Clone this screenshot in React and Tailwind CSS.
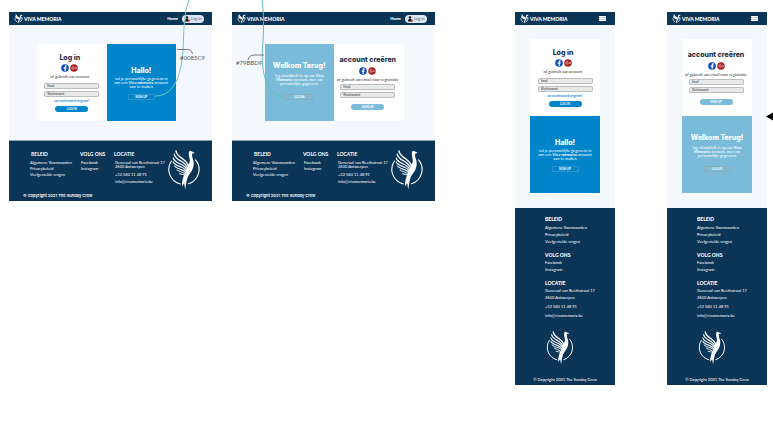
import React, { useId } from "react";

const cx = (...parts) => parts.filter(Boolean).join(" ");

const FOOTER = {
  beleid: ["Algemene Voorwaarden", "Privacybeleid", "Veelgestelde vragen"],
  volg: ["Facebook", "Instagram"],
  straat: ["Generaal van Reethstraat 17", "2600 Antwerpen"],
  contact: ["+32 560 11 48 91", "info@vivamemoria.be"],
};

function Bird({ className }) {
  return (
    <svg viewBox="0 0 32 40" className={className} fill="none" stroke="#fff" strokeLinecap="round" aria-hidden="true">
      <path d="M3.400 11A15 15 0 0 0 12.500 34" strokeWidth="1.100" />
      <path d="M27.500 9.800A15 15 0 0 1 20.500 33.800" strokeWidth="1.100" />
      <path d="M20.800 3C21 0.800 22.800 0.300 24 1.500L27 3L24.300 3.600C23.600 5.500 24.400 7.500 25.200 10C26.600 15 25 20 21.800 23.800C19.300 27 18.800 30 18.300 33L17.200 39.500L16.200 33L14 36.500C13.800 31 15 27 16.500 24.500C17.500 22 19 20.500 19.500 17.500C20.500 14 22 13 21.800 10C21.600 8 20.600 5.500 20.800 3Z" fill="#fff" stroke="none" />
      <path d="M8 1C8.500 5 12 7 15.500 9.500C19 12 21 15 20.500 19" strokeWidth="1.500" />
      <path d="M6.200 4.200C7 8.500 11 10 14.500 12C17.500 14 19.500 16 19.500 20" strokeWidth="1.300" />
      <path d="M5.200 8C6 11.500 10 13 13.500 14.500C16.500 16 18.500 17.500 18.800 21" strokeWidth="1.200" />
      <path d="M5.200 12C6.500 14.700 10 15.900 13 17C15.800 18 17.500 19.200 18.300 22" strokeWidth="1.200" />
      <path d="M6.500 16C8 18 11 18.700 13.500 19.600C15.500 20.200 17 21 17.800 23" strokeWidth="1.100" />
      <path d="M9 20C11 21.500 14 21.600 17 24M11.500 23.800C13 24.500 15 24.500 17 25" strokeWidth="1" />
    </svg>
  );
}

function SmallBird() {
  return (
    <svg viewBox="0 0 9 9" className="size-[9px] shrink-0" fill="none" stroke="#fff" strokeLinecap="round" aria-hidden="true">
      <path d="M2 1C2.500 2.500 3.500 3 5 4M1.500 2.800C2.500 4 3.500 4.200 4.800 4.800M7.800 1.300C6.300 1 6.600 2.500 6.300 3.800C6 5.400 4.800 5.800 4.300 8.300" strokeWidth="1.100" />
      <path d="M1 4.800C1 6 1.800 7.300 3 7.800M7.800 3.500C8.300 5.300 7.400 7.200 5.900 7.900" strokeWidth="0.900" strokeDasharray="1.200 1" />
    </svg>
  );
}

function Socials() {
  return (
    <div className="flex justify-center gap-px">
      <button type="button" aria-label="Facebook" className="size-2">
        <svg viewBox="0 0 8 8" className="size-2">
          <circle cx="4" cy="4" r="3.800" fill="#0b48b8" />
          <path d="M3.600 7V4.700H2.600V3.600H3.600V3C3.600 1.800 4.200 1.200 5.700 1.400V2.400C5 2.300 4.800 2.500 4.800 3V3.600H5.700L5.500 4.700H4.800V7Z" fill="#fff" />
        </svg>
      </button>
      <button type="button" aria-label="Google+" className="size-2">
        <svg viewBox="0 0 8 8" className="size-2">
          <circle cx="4" cy="4" r="3.800" fill="#a82424" />
          <path d="M4.200 3.100A1.300 1.300 0 1 0 4.300 4.600V4.100H3.300M5.300 4H6.800M6 3.300V4.800" fill="none" stroke="#f3dcdc" strokeWidth="0.600" />
        </svg>
      </button>
    </div>
  );
}

function Header({ mobile }) {
  return (
    <header className={cx("flex h-[13px] items-center bg-[#0b3557] pl-[5px] text-white", mobile ? "pr-[9px]" : "pr-2")}>
      <SmallBird />
      <span className="ml-px text-[5px] leading-[8px] font-black whitespace-nowrap">VIVA MEMORIA</span>
      {mobile ? (
        <button type="button" aria-label="Menu" className="ml-auto">
          <svg viewBox="0 0 7 5" className="block h-[5px] w-[7px]">
            <path d="M0 0H7V5H0Z" fill="#c3ced8" />
            <path d="M0 .5H7M0 2.500H7M0 4.500H7" stroke="#fff" strokeWidth="1" />
          </svg>
        </button>
      ) : (
        <nav className="ml-auto flex items-center gap-1">
          <a href="#home" className="text-[4px] leading-[6px] font-black">Home</a>
          <button type="button" className="flex h-2 w-[22px] items-center gap-px rounded-full bg-[#d9e6f2] pl-[3px] text-[4px] leading-[6px] text-[#52606e]">
            <svg viewBox="0 0 5 6" className="h-[6px] w-[5px] shrink-0">
              <circle cx="2" cy="1.500" r="1.300" fill="#111" />
              <path d="M0 5.500C0 3.500 1 3 2 3S4 3.500 4 5.500Z" fill="#111" />
              <circle cx="4" cy="4.500" r="1" fill="#e03030" />
            </svg>
            <span className="whitespace-nowrap">Log in</span>
          </button>
        </nav>
      )}
    </header>
  );
}

function Field({ label, type }) {
  const id = useId();
  return (
    <label htmlFor={id} className="block h-[6px] w-[55px]">
      <input
        id={id}
        type={type}
        aria-label={label}
        placeholder={label}
        className="block h-[6px] w-full rounded-[2px] bg-[#e9e9e9] px-[3px] py-0 text-[3px] leading-[6px] ring-1 ring-[#bdbdbd] ring-inset placeholder:text-[#333]"
      />
    </label>
  );
}

const title = "font-[Inter,sans-serif] text-[7px] leading-[10px] font-extrabold whitespace-nowrap";

function FormCard({ register }) {
  return (
    <form className={cx("flex h-[77px] min-w-0 flex-1 flex-col items-center bg-white text-[#1f2f45]", register ? "pt-[11px] pr-0.5" : "pt-[9px]")}>
      <div className={cx("flex flex-col items-center", !register && "pr-1")}>
        <h2 className={cx(title, register ? "mb-0.5" : "mb-px")}>
          {register ? "account creëren" : "Log in"}
        </h2>
        <Socials />
        <p className={cx("mt-0.5 text-[4px] leading-[6px] whitespace-nowrap text-[#333]", register ? "mb-px" : "mb-[3px]")}>
          {register ? "of gebruik uw email voor registratie" : "of gebruik uw account"}
        </p>
      </div>
      <div className="flex flex-col gap-0.5">
        <Field label="Email" type="email" />
        <Field label="Wachtwoord" type="password" />
      </div>
      {!register && (
        <a href="#vergeten" className="mt-px mb-0.5 text-[3px] leading-[6px] font-bold whitespace-nowrap text-[#1688d8]">
          uw wachtwoord vergeten?
        </a>
      )}
      <button
        type="button"
        className={cx("h-[6px] w-[33px] rounded-full text-[3px] leading-[6px] font-bold text-white", register ? "mt-[6px] bg-[#79bbd9]" : "bg-[#0085ca]")}
      >
        {register ? "SIGN UP" : "LOG IN"}
      </button>
    </form>
  );
}

function Panel({ welcome }) {
  return (
    <section className={cx("flex h-[77px] min-w-0 flex-1 flex-col items-center text-center text-white", welcome ? "bg-[#79bbd9] pt-[17px]" : "bg-[#0085ca] pt-[22px]")}>
      <h2 className={title}>{welcome ? "Welkom Terug!" : "Hallo!"}</h2>
      {welcome ? (
        <p className="mt-[3px] mb-2 text-[4px] leading-[4px] whitespace-nowrap">
          log alstublieft in op uw <b>Viva</b><br /><b>Memoria</b> account, met uw<br />persoonlijke gegevens
        </p>
      ) : (
        <p className="mt-px mb-[5px] text-[4px] leading-[4px] whitespace-nowrap">
          vul je persoonlijke gegevens in<br />om een <b>Viva memoria</b> account<br />aan te maken
        </p>
      )}
      <button type="button" className={cx("h-[6px] w-[27px] rounded-[1px] text-[3px] leading-[6px] font-bold ring-1 ring-inset", welcome ? "ring-[#8cabb9]" : "ring-[#2f93c8]")}>
        {welcome ? "LOG IN" : "SIGN UP"}
      </button>
    </section>
  );
}

function Links({ items, className }) {
  return (
    <ul className={className}>
      {items.map((t) => (
        <li key={t}><a href="#info">{t}</a></li>
      ))}
    </ul>
  );
}

function DesktopFooter() {
  return (
    <footer className="border-t border-[#8aa3b5] bg-[#0b3557] text-white">
      <div className="flex h-[49px] pt-[9px] pr-[12px] pl-[21px] text-[4px] whitespace-nowrap">
        <div className="w-[51px]">
          <h3 className="mb-0.5 pl-px text-[5px] leading-[8px] font-bold">BELEID</h3>
          <Links items={FOOTER.beleid} className="leading-[6px]" />
        </div>
        <div className="w-[33px]">
          <h3 className="mb-0.5 -ml-px text-[5px] leading-[8px] font-bold">VOLG ONS</h3>
          <Links items={FOOTER.volg} className="leading-[6px]" />
        </div>
        <div>
          <h3 className="mb-[3px] text-[5px] leading-[8px] font-bold">LOCATIE</h3>
          <address className="pl-px not-italic">
            <Links items={FOOTER.straat} className="leading-[4px]" />
            <Links items={FOOTER.contact} className="mt-0.5 leading-[7px]" />
          </address>
        </div>
        <Bird className="ml-auto h-10 w-8 shrink-0" />
      </div>
      <p className="h-[11px] pl-[14px] font-[Inter,sans-serif] text-[4px] leading-[11px] font-semibold whitespace-nowrap">© Copyright 2021 The Sunday Crew</p>
    </footer>
  );
}

function MobileFooter() {
  return (
    <footer className="bg-[#0b3557] pt-[7px] text-white">
      <div className="pl-[30px] text-[4px] leading-[7px] whitespace-nowrap">
        <h3 className="mb-px text-[5px] leading-[8px] font-black">BELEID</h3>
        <Links items={FOOTER.beleid} />
        <h3 className="mt-[6px] text-[5px] leading-[8px] font-black">VOLG ONS</h3>
        <Links items={FOOTER.volg} />
        <h3 className="mt-[6px] text-[5px] leading-[8px] font-black">LOCATIE</h3>
        <address className="not-italic">
          <Links items={FOOTER.straat} />
          <Links items={FOOTER.contact} className="flex flex-col gap-0.5 pt-0.5" />
        </address>
      </div>
      <Bird className="mt-3 ml-[31px] h-[34px] w-[28px]" />
      <p className="mt-[9px] h-[11px] text-center text-[4px] leading-[11px] font-medium whitespace-nowrap">© Copyright 2021 The Sunday Crew</p>
    </footer>
  );
}

function Desktop({ register }) {
  return (
    <article className="min-w-0 flex-1 bg-[#f5f9fd]">
      <Header />
      <main className={cx("flex pt-[19px] pb-[19px]", register ? "pr-[31px] pl-[33px]" : "pr-[36px] pl-[28px]")}>
        {register ? <><Panel welcome /><FormCard register /></> : <><FormCard /><Panel /></>}
      </main>
      <DesktopFooter />
    </article>
  );
}

function Mobile({ register }) {
  return (
    <article className="min-w-0 flex-1 bg-[#f5f9fd]">
      <Header mobile />
      <main className="flex flex-col px-[15px] pt-[14px] pb-[15px]">
        <div className="flex"><FormCard register={register} /></div>
        <div className="flex"><Panel welcome={register} /></div>
      </main>
      <MobileFooter />
    </article>
  );
}

function Connectors() {
  return (
    <svg viewBox="0 0 773 125" className="pointer-events-none absolute top-0 left-0 h-[125px] w-[773px]" fill="none" aria-hidden="true">
      <path d="M155 96C176 96 183 72 183.500 38C184 20 186 8 189 0" stroke="#74c6bb" />
      <path d="M262 0C264 12 264 30 262.500 48C261 72 266 96 284 96.500" stroke="#62bfb4" />
      <path d="M177 49.500H187C190 49.500 192 51 192.500 54" stroke="#555" strokeWidth="0.800" />
      <path d="M264 55H254C251 55 248.500 57 248 60" stroke="#555" strokeWidth="0.800" />
      <path d="M766 116.500L773 112.500V120.500Z" fill="#000" />
    </svg>
  );
}

export default function App() {
  return (
    <div className="relative min-h-screen overflow-hidden bg-white font-[Lato,sans-serif]">
      <div className="flex items-start pt-3 pr-[6px] pl-[9px]">
        <div className="mr-20 flex flex-[426] items-start gap-5">
          <Desktop />
          <Desktop register />
        </div>
        <div className="flex flex-[252] items-start gap-[52px]">
          <Mobile />
          <Mobile register />
        </div>
      </div>
      <Connectors />
      <span className="absolute top-[54px] left-[180px] text-[6px] leading-[7px] text-[#555]">#0085C9</span>
      <span className="absolute top-[59px] left-[236px] text-[6px] leading-[7px] text-[#555]">#79BBD9</span>
    </div>
  );
}
